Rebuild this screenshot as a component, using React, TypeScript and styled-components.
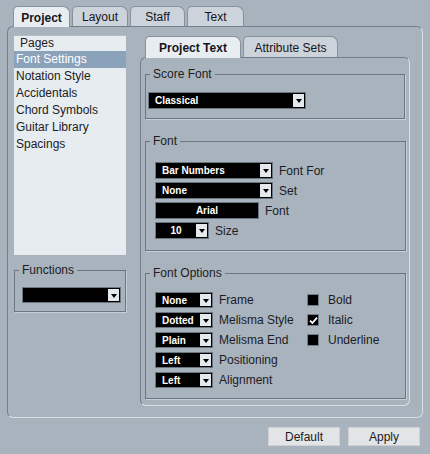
import styled, { createGlobalStyle } from "styled-components";

const GlobalStyle = createGlobalStyle`
  html, body {
    margin: 0;
    padding: 0;
    background: #a9b3be;
  }
  body {
    font-family: "Liberation Sans", Arial, sans-serif;
    font-size: 12px;
    color: #1c1c22;
  }
`;

const pages = [
  "Font Settings",
  "Notation Style",
  "Accidentals",
  "Chord Symbols",
  "Guitar Library",
  "Spacings",
];

const fontOptions = [
  { value: "None", label: "Frame" },
  { value: "Dotted", label: "Melisma Style" },
  { value: "Plain", label: "Melisma End" },
  { value: "Left", label: "Positioning" },
  { value: "Left", label: "Alignment" },
];

const styles = [
  { label: "Bold", checked: false },
  { label: "Italic", checked: true },
  { label: "Underline", checked: false },
];

export default function App() {
  return (
    <>
      <GlobalStyle />
      <Window>
        <TabBar $indent={6} $h={20}>
          <Tab $active $w={57} $h={20}>Project</Tab>
          <Tab $w={56} $h={20}>Layout</Tab>
          <Tab $w={55} $h={20}>Staff</Tab>
          <Tab $w={57} $h={20}>Text</Tab>
        </TabBar>
        <Panel>
          <LeftCol>
            <List>
              <ListHeader>Pages</ListHeader>
              {pages.map((p, i) => (
                <ListRow key={p} $selected={i === 0}>
                  {p}
                </ListRow>
              ))}
            </List>
            <Group $w={112}>
              <Legend>Functions</Legend>
              <GroupBody $pad="9px 0 8px 7px">
                <Select $w={99} $h={16}>
                  <SelectText />
                  <Arrow />
                </Select>
              </GroupBody>
            </Group>
          </LeftCol>

          <RightCol>
            <TabBar $indent={5} $h={21}>
              <Tab $active $w={96} $h={21}>Project Text</Tab>
              <Tab $w={95} $h={21}>Attribute Sets</Tab>
            </TabBar>
            <InnerPanel>
              <Group $w={260}>
                <Legend>Score Font</Legend>
                <GroupBody $pad="10px 0 9px 2px">
                  <Select $w={158} $h={17}>
                    <SelectText>Classical</SelectText>
                    <Arrow />
                  </Select>
                </GroupBody>
              </Group>

              <Group $w={261}>
                <Legend>Font</Legend>
                <GroupBody $pad="13px 0 11px 9px">
                  <Rows $gap={3}>
                    <Row>
                      <Select $w={118} $h={17}>
                        <SelectText>Bar Numbers</SelectText>
                        <Arrow />
                      </Select>
                      <Label>Font For</Label>
                    </Row>
                    <Row>
                      <Select $w={118} $h={17}>
                        <SelectText>None</SelectText>
                        <Arrow />
                      </Select>
                      <Label>Set</Label>
                    </Row>
                    <Row>
                      <Select $w={104} $h={17}>
                        <SelectText $center>Arial</SelectText>
                      </Select>
                      <Label>Font</Label>
                    </Row>
                    <Row>
                      <Select $w={54} $h={17}>
                        <SelectText $center>10</SelectText>
                        <Arrow />
                      </Select>
                      <Label>Size</Label>
                    </Row>
                  </Rows>
                </GroupBody>
              </Group>

              <Group $w={261}>
                <Legend>Font Options</Legend>
                <GroupBody $pad="11px 0 10px 9px">
                  <OptionsGrid>
                    <Rows $gap={4}>
                      {fontOptions.map((o) => (
                        <Row key={o.label}>
                          <Select $w={58} $h={16}>
                            <SelectText>{o.value}</SelectText>
                            <Arrow />
                          </Select>
                          <Label>{o.label}</Label>
                        </Row>
                      ))}
                    </Rows>
                    <Rows $gap={4}>
                      {styles.map((s) => (
                        <Row key={s.label} $gap={9}>
                          <Check>
                            {s.checked && (
                              <svg width="9" height="9" viewBox="0 0 9 9">
                                <path
                                  d="M1 4.6 L3.4 7 L8 1.6"
                                  stroke="#fff"
                                  strokeWidth="1.8"
                                  fill="none"
                                />
                              </svg>
                            )}
                          </Check>
                          <Label>{s.label}</Label>
                        </Row>
                      ))}
                    </Rows>
                  </OptionsGrid>
                </GroupBody>
              </Group>
            </InnerPanel>
          </RightCol>
        </Panel>
        <Footer>
          <Button>Default</Button>
          <Button>Apply</Button>
        </Footer>
      </Window>
    </>
  );
}

const Window = styled.div`
  width: 430px;
  height: 454px;
  box-sizing: border-box;
  padding: 6px 0 0 7px;
  overflow: hidden;
`;

const TabBar = styled.div<{ $indent: number; $h: number }>`
  display: flex;
  align-items: flex-start;
  gap: 2px;
  height: ${(p) => p.$h}px;
  padding-left: ${(p) => p.$indent}px;
  position: relative;
  z-index: 1;
`;

const Tab = styled.div<{ $active?: boolean; $w: number; $h: number }>`
  width: ${(p) => p.$w}px;
  height: ${(p) => (p.$active ? p.$h + 1 : p.$h)}px;
  box-sizing: border-box;
  display: flex;
  align-items: center;
  justify-content: center;
  padding-top: 1px;
  border: 1px solid #87919c;
  border-bottom: none;
  border-radius: 5px 7px 0 0;
  background: ${(p) => (p.$active ? "#e8edf2" : "#ccd3da")};
  font-weight: ${(p) => (p.$active ? "bold" : "normal")};
  font-size: 12px;
  color: #16161c;
`;

const Panel = styled.div`
  width: 416px;
  height: 392px;
  box-sizing: border-box;
  border: 1px solid;
  border-color: #737e8a #d9dfe5 #d9dfe5 #737e8a;
  border-radius: 6px;
  padding: 8px 0 0 6px;
  display: flex;
  gap: 14px;
`;

const LeftCol = styled.div`
  width: 112px;
  display: flex;
  flex-direction: column;
  gap: 8px;
`;

const List = styled.div`
  height: 220px;
  background: #e7ecf1;
  border-top: 1px solid #b4bdc6;
  box-sizing: border-box;
`;

const ListHeader = styled.div`
  height: 15px;
  line-height: 15px;
  padding-left: 6px;
`;

const ListRow = styled.div<{ $selected?: boolean }>`
  height: 17px;
  line-height: 17px;
  padding-left: 2px;
  background: ${(p) => (p.$selected ? "#8ba2bb" : "transparent")};
  color: ${(p) => (p.$selected ? "#ffffff" : "#1c1c22")};
`;

const RightCol = styled.div`
  width: 270px;
  margin-top: 1px;
  display: flex;
  flex-direction: column;
`;

const InnerPanel = styled.div`
  height: 349px;
  box-sizing: border-box;
  border: 1px solid;
  border-color: #737e8a #d9dfe5 #d9dfe5 #737e8a;
  border-radius: 6px;
  padding: 9px 0 0 4px;
  display: flex;
  flex-direction: column;
  gap: 15px;
`;

const Group = styled.fieldset<{ $w: number }>`
  margin: 0;
  padding: 0;
  min-width: 0;
  width: ${(p) => p.$w}px;
  box-sizing: border-box;
  border: 1px solid #6b7682;
  box-shadow: 1px 1px 0 #c6ced6;
`;

const Legend = styled.legend`
  margin-left: 4px;
  padding: 0 3px;
  font-size: 12px;
  line-height: 15px;
  color: #1c1c22;
`;

const GroupBody = styled.div<{ $pad: string }>`
  padding: ${(p) => p.$pad};
`;

const Rows = styled.div<{ $gap: number }>`
  display: flex;
  flex-direction: column;
  gap: ${(p) => p.$gap}px;
`;

const Row = styled.div<{ $gap?: number }>`
  display: flex;
  align-items: center;
  gap: ${(p) => p.$gap ?? 6}px;
`;

const OptionsGrid = styled.div`
  display: grid;
  grid-template-columns: 152px 1fr;
`;

const Label = styled.span`
  font-size: 12px;
  color: #1c1c22;
  white-space: nowrap;
`;

const Select = styled.div<{ $w: number; $h: number }>`
  width: ${(p) => p.$w}px;
  height: ${(p) => p.$h}px;
  box-sizing: border-box;
  display: flex;
  border: 1px solid #6c7682;
  background: #000;
`;

const SelectText = styled.span<{ $center?: boolean }>`
  flex: 1;
  display: flex;
  align-items: center;
  justify-content: ${(p) => (p.$center ? "center" : "flex-start")};
  padding-left: ${(p) => (p.$center ? 0 : 6)}px;
  color: #fff;
  font-size: 10px;
  font-weight: bold;
  white-space: nowrap;
  overflow: hidden;
`;

const Arrow = styled.span`
  width: 11px;
  margin: 1px 1px 1px 0;
  background: #e4e9ee;
  display: flex;
  align-items: center;
  justify-content: center;
  &::after {
    content: "";
    margin-top: 1px;
    border-left: 3.5px solid transparent;
    border-right: 3.5px solid transparent;
    border-top: 4px solid #000;
  }
`;

const Check = styled.span`
  width: 12px;
  height: 12px;
  box-sizing: border-box;
  border: 1px solid #747e89;
  background: #000;
  display: flex;
  align-items: center;
  justify-content: center;
  margin: 2px 0;
`;

const Footer = styled.div`
  display: flex;
  justify-content: flex-end;
  gap: 8px;
  margin-top: 9px;
  padding-right: 10px;
`;

const Button = styled.button`
  width: 72px;
  height: 19px;
  box-sizing: border-box;
  padding: 0;
  border: 1px solid #cdd1d5;
  background: #e2e4e6;
  font-family: "Liberation Sans", Arial, sans-serif;
  font-size: 12px;
  color: #1c1c22;
`;
